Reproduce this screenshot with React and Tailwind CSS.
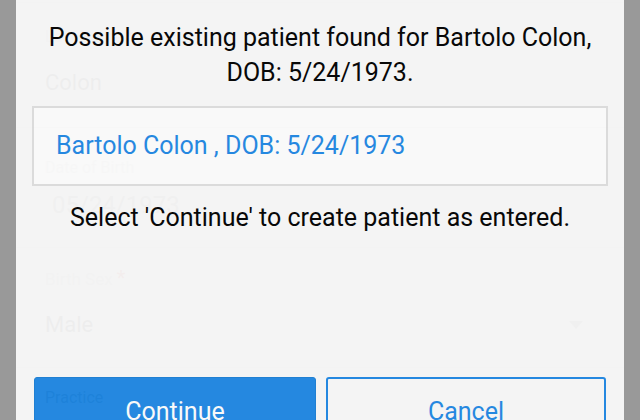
import React from "react";

const font = { fontFamily: "Roboto, 'Noto Sans', sans-serif" };

// Form that sits behind the modal (only shows through faintly)
const PatientForm = () => (
  <div className="mx-[16px] flex flex-col">
    <div className="h-[2px]" />
    <div className="border-t border-[#e0e0e0] px-[29px] pt-[24px] pb-[30px]">
      <div className="text-[16px] leading-[20px] text-[#c4c4c4]">
        Last Name <span className="text-[#f44336]">*</span>
      </div>
      <div className="mt-[22px] text-[22px] leading-[28px] text-[#444]">Colon</div>
    </div>
    <div className="border-t border-[#e0e0e0] px-[29px] pt-[30px] pb-[28px]">
      <div className="text-[16px] leading-[20px] text-[#c4c4c4]">Date of Birth</div>
      <div className="mt-[13px] pl-[7px] text-[24px] leading-[28px] text-[#888]">05/24/1973</div>
    </div>
    <div className="border-t border-[#e0e0e0] px-[29px] pt-[20px] pb-[28px]">
      <div className="text-[17px] leading-[20px] text-[#c4c4c4]">
        Birth Sex <span className="text-[20px] text-[#f44336]">*</span>
      </div>
      <div className="mt-[22px] flex items-center justify-between pr-[12px]">
        <span className="text-[22px] leading-[28px] text-[#444]">Male</span>
        <svg width="14" height="8" viewBox="0 0 14 8">
          <path d="M0 0 L14 0 L7 8 Z" fill="#9e9e9e" />
        </svg>
      </div>
    </div>
    <div className="border-t border-[#e0e0e0] px-[29px] pt-[20px]">
      <div className="text-[16px] leading-[20px] text-[#333]">Practice</div>
    </div>
  </div>
);

export default function App() {
  return (
    <div className="relative h-[420px] w-[640px] overflow-hidden bg-white" style={font}>
      <PatientForm />

      {/* dim backdrop */}
      <div className="absolute inset-0 bg-black/40" />

      {/* modal */}
      <div className="absolute left-[16px] right-[16px] top-[-10px] h-[480px] bg-[#fafafa] opacity-[0.94]">
        <div className="flex flex-col px-[16px] pt-[30px]">
          <p className="text-center text-[25px] leading-[35px] text-black">
            Possible existing patient found for Bartolo Colon,
            <br />
            DOB: 5/24/1973.
          </p>
          <div className="mt-[16px] flex h-[80px] items-center border-2 border-[#e0e0e0] bg-white px-[22px]">
            <span className="text-[25px] leading-[30px] text-[#1e88e5]">
              Bartolo Colon , DOB: 5/24/1973
            </span>
          </div>
          <p className="mt-[14px] text-center text-[25px] leading-[35px] text-black">
            Select 'Continue' to create patient as entered.
          </p>
          <div className="mt-[142px] flex gap-[10px] px-[2px]">
            <button className="flex h-[70px] w-[282px] items-center justify-center rounded-[3px] border border-[#1a7fd6] bg-[#1e88e5] text-[25px] text-white">
              Continue
            </button>
            <button className="flex h-[70px] flex-1 items-center justify-center rounded-[3px] border-2 border-[#1e88e5] bg-transparent text-[25px] text-[#1e88e5]">
              Cancel
            </button>
          </div>
        </div>
      </div>
    </div>
  );
}
